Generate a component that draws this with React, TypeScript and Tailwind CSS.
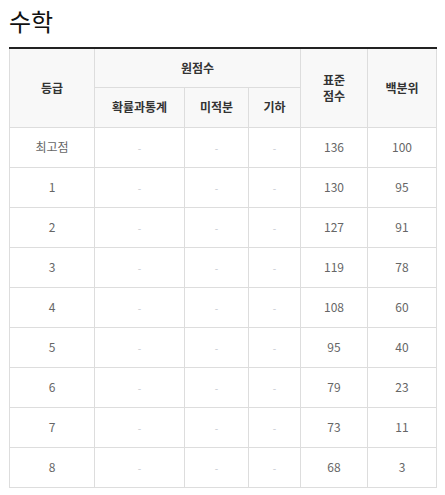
const rows: [string, string, string][] = [
  ["최고점", "136", "100"],
  ["1", "130", "95"],
  ["2", "127", "91"],
  ["3", "119", "78"],
  ["4", "108", "60"],
  ["5", "95", "40"],
  ["6", "79", "23"],
  ["7", "73", "11"],
  ["8", "68", "3"],
];

const font = { fontFamily: '"Noto Sans CJK KR", "Noto Sans", sans-serif' };

export default function App() {
  return (
    <div className="bg-white px-[9px] pt-[3px]" style={font}>
      <h2 className="text-[24px] leading-[36px] font-normal text-[#111] mb-[8px]">수학</h2>
      <table className="w-[427px] table-fixed border-collapse border-t-2 border-t-[#222] text-center">
        <colgroup>
          <col className="w-[85px]" />
          <col className="w-[90px]" />
          <col className="w-[64px]" />
          <col className="w-[52px]" />
          <col className="w-[67px]" />
          <col className="w-[69px]" />
        </colgroup>
        <thead className="bg-[#f8f8f8] text-[12px] font-bold text-[#333]">
          <tr className="h-[39px]">
            <th rowSpan={2} className="border border-[#ddd] border-t-0 font-bold">등급</th>
            <th colSpan={3} className="border border-[#ddd] border-t-0 font-bold">원점수</th>
            <th rowSpan={2} className="border border-[#ddd] border-t-0 font-bold leading-[16px]">
              표준
              <br />
              점수
            </th>
            <th rowSpan={2} className="border border-[#ddd] border-t-0 font-bold">백분위</th>
          </tr>
          <tr className="h-[40px]">
            <th className="border border-[#ddd] font-bold">확률과통계</th>
            <th className="border border-[#ddd] font-bold">미적분</th>
            <th className="border border-[#ddd] font-bold">기하</th>
          </tr>
        </thead>
        <tbody className="text-[12px] text-[#666]">
          {rows.map(([grade, std, pct]) => (
            <tr key={grade} className="h-[40px]">
              <td className="border border-[#ddd]">{grade}</td>
              <td className="border border-[#ddd] text-[10px] text-[#c4c8d0]">-</td>
              <td className="border border-[#ddd] text-[10px] text-[#c4c8d0]">-</td>
              <td className="border border-[#ddd] text-[10px] text-[#c4c8d0]">-</td>
              <td className="border border-[#ddd]">{std}</td>
              <td className="border border-[#ddd]">{pct}</td>
            </tr>
          ))}
        </tbody>
      </table>
    </div>
  );
}
